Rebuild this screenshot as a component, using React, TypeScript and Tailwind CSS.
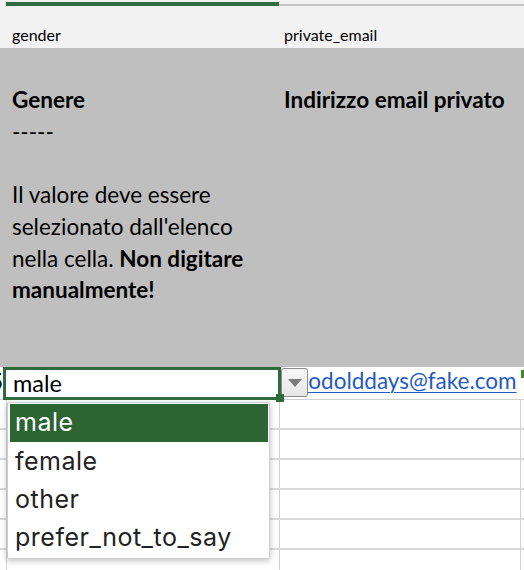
const options = ["male", "female", "other", "prefer_not_to_say"];
const gridRows = [0, 1, 2, 3, 4, 5];

export default function App() {
	return (
		<div className="relative h-[570px] w-[524px] overflow-hidden bg-white font-['Lato',sans-serif] text-black">
			{/* column strip with selection marker */}
			<div className="flex h-[6px] bg-[#f2f2f2]">
				<div className="w-[6px]" />
				<div className="mt-[2px] h-[4px] w-[273px] bg-[#2f6b3c]" />
				<div className="mt-[4px] h-[2px] flex-1 bg-[#c4c4c4]" />
			</div>

			{/* field names */}
			<div className="flex h-[42px] items-end bg-[#f2f2f2] pb-[3px] text-[16px] leading-[20px]">
				<div className="w-[279px] pl-[12px]">gender</div>
				<div className="pl-[5px]">private_email</div>
			</div>

			{/* description row */}
			<div className="flex h-[319px] bg-[#bfbfbf] pt-[36px] text-[22.5px] leading-[31.7px]">
				<div className="w-[279px] pl-[12px]">
					<p className="font-bold">Genere</p>
					<p>-----</p>
					<p>&nbsp;</p>
					<p>
						Il valore deve essere
						<br />
						selezionato dall'elenco
						<br />
						nella cella. <b>Non digitare</b>
						<br />
						<b>manualmente!</b>
					</p>
				</div>
				<div className="pl-[5px] font-bold">Indirizzo email privato</div>
			</div>

			{/* data row */}
			<div className="flex h-[32px] bg-white text-[22.5px] leading-[26px]">
				<div className="flex w-[3px] justify-end overflow-hidden pt-[2px]">
					<span>5</span>
				</div>
				<div className="relative z-10 h-[33px] w-[278px] border-[3px] border-[#2f6b3c] pl-[7px] text-[23.5px]">
					male
					<div className="absolute -bottom-[5px] -right-[6px] h-[8px] w-[8px] bg-[#2f6b3c]" />
				</div>
				<div className="relative flex-1 overflow-hidden pl-[3px] pt-[1px]">
					<span className="whitespace-nowrap text-[#1f5bc4] underline decoration-1 underline-offset-[3px]">
						goodolddays@fake.com
					</span>
					<div className="absolute left-0 top-[1px] flex h-[29px] w-[27px] items-center justify-center rounded-[3px] border border-[#8c8c8c] bg-gradient-to-b from-[#f7f7f7] to-[#e6e6e6]">
						<svg width="14" height="8" viewBox="0 0 14 8">
							<path d="M0 0 H14 L7 8 Z" fill="#7b7b7b" />
						</svg>
					</div>
				</div>
			</div>

			{/* empty grid */}
			<div className="border-t border-[#d0d0d0]">
				{gridRows.map((r) => (
					<div key={r} className="flex h-[30px] border-b-2 border-[#d9d9d9]">
						<div className="w-[7px] border-r border-[#d0d0d0]" />
						<div className="w-[273px] border-r border-[#d0d0d0]" />
						<div className="w-[241px] border-r border-[#d0d0d0]" />
					</div>
				))}
			</div>

			{/* comment marker */}
			<div className="absolute left-[521px] top-[370px] h-[8px] w-[3px] bg-[#3a8a2e]" />

			{/* validation list */}
			<div className="absolute left-[7px] top-[402px] w-[263px] rounded-[2px] border border-[#cfcfcf] bg-white py-[1px] pl-[2px] pr-[1px] font-['Inter',sans-serif] text-[25px] tracking-[0.02em] text-[#222] shadow-[0_2px_6px_rgba(0,0,0,0.25)]">
				{options.map((o, i) => (
					<div
						key={o}
						className={`flex h-[38.3px] items-center pl-[5px] ${
							i === 0 ? "bg-[#2c6533] text-white" : ""
						}`}
					>
						{o}
					</div>
				))}
			</div>
		</div>
	);
}
